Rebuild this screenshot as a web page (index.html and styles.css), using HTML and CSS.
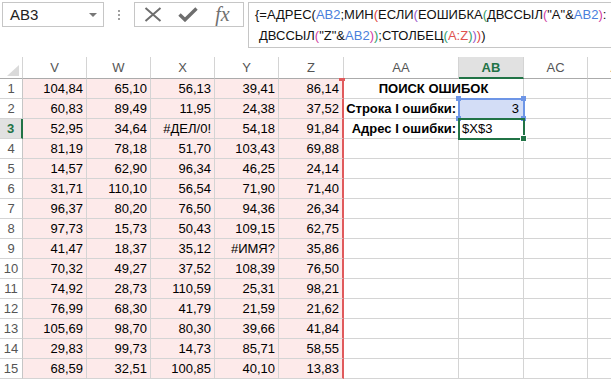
FILE: index.html
```html
<!DOCTYPE html>
<html lang="ru">
<head>
  <meta charset="UTF-8" />
  <title>Поиск ошибок</title>
  <link rel="stylesheet" href="styles.css">
</head>
<body>
  <div class="formula-bar">
    <div class="name-box"><span>AB3</span><span class="arrow"></span></div>
    <div class="grip"><i></i><i></i><i></i></div>
    <div class="buttons">
      <span class="btn">
        <svg width="18" height="15" viewBox="0 0 18 15"><path d="M1.5 1 L16.5 14 M16.5 1 L1.5 14" stroke="#6e6e6e" stroke-width="2" fill="none"/></svg>
      </span>
      <span class="btn">
        <svg width="20" height="15" viewBox="0 0 20 15"><path d="M1.5 7.5 L7 12.8 L18.5 1.5" stroke="#6e6e6e" stroke-width="3.4" fill="none"/></svg>
      </span>
      <span class="btn fx">fx</span>
    </div>
    <div class="formula">
      <div class="line">{=АДРЕС(<span class="ref">AB2</span>;МИН<span class="p1">(</span>ЕСЛИ<span class="p2">(</span>ЕОШИБКА<span class="p3">(</span>ДВССЫЛ<span class="p4">(</span>"A"&amp;<span class="ref">AB2</span><span class="p4">)</span>:</div>
      <div class="line indent">ДВССЫЛ<span class="p4">(</span>"Z"&amp;<span class="ref">AB2</span><span class="p4">)</span><span class="p3">)</span>;СТОЛБЕЦ<span class="p3">(</span><span class="ref2">A:Z</span><span class="p3">)</span><span class="p2">)</span><span class="p1">)</span>)</div>
    </div>
  </div>

  <div class="sheet">
    <div class="row head">
      <div class="corner"><svg width="23" height="22" viewBox="0 0 23 22"><path d="M19 8 L19 19 L7 19 Z" fill="#dadada"/></svg></div>
      <div>V</div><div>W</div><div>X</div><div>Y</div><div>Z</div>
      <div>AA</div><div class="sel-col">AB</div><div>AC</div><div>AD</div>
    </div>

    <div class="row data">
      <div class="rh">1</div>
      <div>104,84</div><div>65,10</div><div>56,13</div><div>39,41</div><div class="nub">86,14</div>
      <div class="title">ПОИСК ОШИБОК</div><div></div><div></div>
    </div>
    <div class="row data">
      <div class="rh">2</div>
      <div>60,83</div><div>89,49</div><div>11,95</div><div>24,38</div><div>37,52</div>
      <div class="label">Строка I ошибки:</div>
      <div class="ref-cell">3<i class="h tl"></i><i class="h tr"></i><i class="h bl"></i><i class="h br"></i></div>
      <div></div><div></div>
    </div>
    <div class="row data">
      <div class="rh sel-row">3</div>
      <div>52,95</div><div>34,64</div><div class="err">#ДЕЛ/0!</div><div>54,18</div><div>91,84</div>
      <div class="label">Адрес I ошибки:</div>
      <div class="active">$X$3<i class="fill"></i></div>
      <div></div><div></div>
    </div>
    <div class="row data">
      <div class="rh">4</div>
      <div>81,19</div><div>78,18</div><div>51,70</div><div>103,43</div><div>69,88</div>
      <div></div><div></div><div></div><div></div>
    </div>
    <div class="row data">
      <div class="rh">5</div>
      <div>14,57</div><div>62,90</div><div>96,34</div><div>46,25</div><div>24,14</div>
      <div></div><div></div><div></div><div></div>
    </div>
    <div class="row data">
      <div class="rh">6</div>
      <div>31,71</div><div>110,10</div><div>56,54</div><div>71,90</div><div>71,40</div>
      <div></div><div></div><div></div><div></div>
    </div>
    <div class="row data">
      <div class="rh">7</div>
      <div>96,37</div><div>80,20</div><div>76,50</div><div>94,36</div><div>26,34</div>
      <div></div><div></div><div></div><div></div>
    </div>
    <div class="row data">
      <div class="rh">8</div>
      <div>97,73</div><div>15,73</div><div>50,43</div><div>109,15</div><div>62,75</div>
      <div></div><div></div><div></div><div></div>
    </div>
    <div class="row data">
      <div class="rh">9</div>
      <div>41,47</div><div>18,37</div><div>35,12</div><div class="err">#ИМЯ?</div><div>35,86</div>
      <div></div><div></div><div></div><div></div>
    </div>
    <div class="row data">
      <div class="rh">10</div>
      <div>70,32</div><div>49,27</div><div>37,52</div><div>108,39</div><div>76,50</div>
      <div></div><div></div><div></div><div></div>
    </div>
    <div class="row data">
      <div class="rh">11</div>
      <div>74,92</div><div>28,73</div><div>110,59</div><div>25,31</div><div>98,21</div>
      <div></div><div></div><div></div><div></div>
    </div>
    <div class="row data">
      <div class="rh">12</div>
      <div>76,99</div><div>68,30</div><div>41,79</div><div>21,59</div><div>21,62</div>
      <div></div><div></div><div></div><div></div>
    </div>
    <div class="row data">
      <div class="rh">13</div>
      <div>105,69</div><div>98,70</div><div>80,30</div><div>39,66</div><div>41,84</div>
      <div></div><div></div><div></div><div></div>
    </div>
    <div class="row data">
      <div class="rh">14</div>
      <div>29,83</div><div>99,73</div><div>14,73</div><div>85,71</div><div>58,55</div>
      <div></div><div></div><div></div><div></div>
    </div>
    <div class="row data">
      <div class="rh">15</div>
      <div>68,59</div><div>32,51</div><div>100,85</div><div>40,10</div><div>13,83</div>
      <div></div><div></div><div></div><div></div>
    </div>
  </div>
</body>
</html>
```

FILE: styles.css
```css
body {
  margin: 0;
  width: 611px;
  height: 379px;
  overflow: hidden;
  background-color: #fff;
  color: #000;
  font-family: 'Liberation Sans', Arial, sans-serif;
}

/* formula bar */

.formula-bar {
  display: flex;
  align-items: flex-start;
  height: 57px;
  padding: 2px 0 0 2px;
  box-sizing: border-box;
}

.name-box {
  width: 102px;
  height: 25px;
  box-sizing: border-box;
  border: 1px solid #c6c6c6;
  display: flex;
  align-items: center;
  justify-content: space-between;
  padding: 0 6px 0 7px;
  font-size: 15px;
  color: #222;
}

.arrow {
  border-left: 4px solid transparent;
  border-right: 4px solid transparent;
  border-top: 4px solid #777;
}

.grip {
  width: 30px;
  height: 25px;
  display: flex;
  flex-direction: column;
  align-items: center;
  justify-content: center;
  gap: 2px;
}

.grip i {
  width: 2px;
  height: 2px;
  background-color: #a0a0a0;
}

.buttons {
  width: 110px;
  height: 25px;
  box-sizing: border-box;
  border: 1px solid #c6c6c6;
  display: flex;
}

.btn {
  flex: 1;
  display: flex;
  align-items: center;
  justify-content: center;
}

.fx {
  font-family: 'Liberation Serif', serif;
  font-style: italic;
  font-size: 20px;
  color: #707070;
  padding-right: 3px;
}

.formula {
  flex: 1;
  height: 46px;
  margin: 0 -1px 0 4px;
  box-sizing: border-box;
  border: 1px solid #c6c6c6;
  padding: 1px 0 0 6px;
  font-size: 13px;
  line-height: 21px;
  white-space: nowrap;
  overflow: hidden;
  color: #111;
}

.formula .indent {
  padding-left: 4px;
}

.ref { color: #4a7fdc; }
.ref2 { color: #e0524f; }
.p1 { color: #e0403c; }
.p2 { color: #9a55c9; }
.p3 { color: #2f9c6a; }
.p4 { color: #cf3fa4; }

/* sheet */

.sheet {
  width: 611px;
  overflow: hidden;
  font-size: 13px;
}

.row {
  display: grid;
  grid-template-columns: 23px 64px 64px 64px 64px 65px 115px 65px 64px 64px;
  height: 20px;
  line-height: 19px;
}

.row > div {
  box-sizing: border-box;
  border-right: 1px solid #d4d4d4;
  border-bottom: 1px solid #d4d4d4;
  white-space: nowrap;
  overflow: hidden;
}

.head {
  height: 22px;
  line-height: 21px;
  color: #555;
}

.head > div {
  text-align: center;
  border-bottom-color: #ababab !important;
}

.corner svg {
  display: block;
}

.head .sel-col {
  background-color: #e1e1e1;
  color: #217346;
  font-weight: bold;
  border-bottom: 2px solid #217346 !important;
}

.rh {
  text-align: center;
  color: #555;
  border-right-color: #c6c6c6 !important;
}

.rh.sel-row {
  background-color: #e1e1e1;
  color: #217346;
  font-weight: bold;
  border-right: 2px solid #217346 !important;
}

.data > :nth-child(n+2):nth-child(-n+6) {
  background-color: #fdeaea;
  text-align: right;
  padding-right: 3px;
}

.data > :nth-child(6) {
  border-right: 2px solid #e05a5c;
}

.row > .nub {
  position: relative;
  overflow: visible;
}

.nub::after {
  content: "";
  position: absolute;
  right: -3px;
  top: -1px;
  width: 6px;
  height: 3px;
  background-color: #e05a5c;
}

.data > .err {
  text-align: center;
  padding-right: 0;
}

.title {
  grid-column: span 2;
  text-align: center;
  font-weight: bold;
}

.label {
  text-align: right;
  font-weight: bold;
  padding-right: 2px;
}

.row > .ref-cell {
  position: relative;
  z-index: 1;
  overflow: visible;
  background-color: #d3ddf6;
  text-align: right;
  padding-right: 4px;
  outline: 2px solid #6d95e6;
  outline-offset: -1px;
}

.h {
  position: absolute;
  width: 5px;
  height: 5px;
  background-color: #6d95e6;
}

.tl { left: -3px; top: -3px; }
.tr { right: -3px; top: -3px; }
.bl { left: -3px; bottom: -3px; }
.br { right: -3px; bottom: -3px; }

.row > .active {
  position: relative;
  z-index: 1;
  overflow: visible;
  padding-left: 3px;
  outline: 2px solid #217346;
  outline-offset: -1px;
}

.fill {
  position: absolute;
  right: -4px;
  bottom: -4px;
  width: 5px;
  height: 5px;
  background-color: #217346;
  border: 1px solid #fff;
}
```
